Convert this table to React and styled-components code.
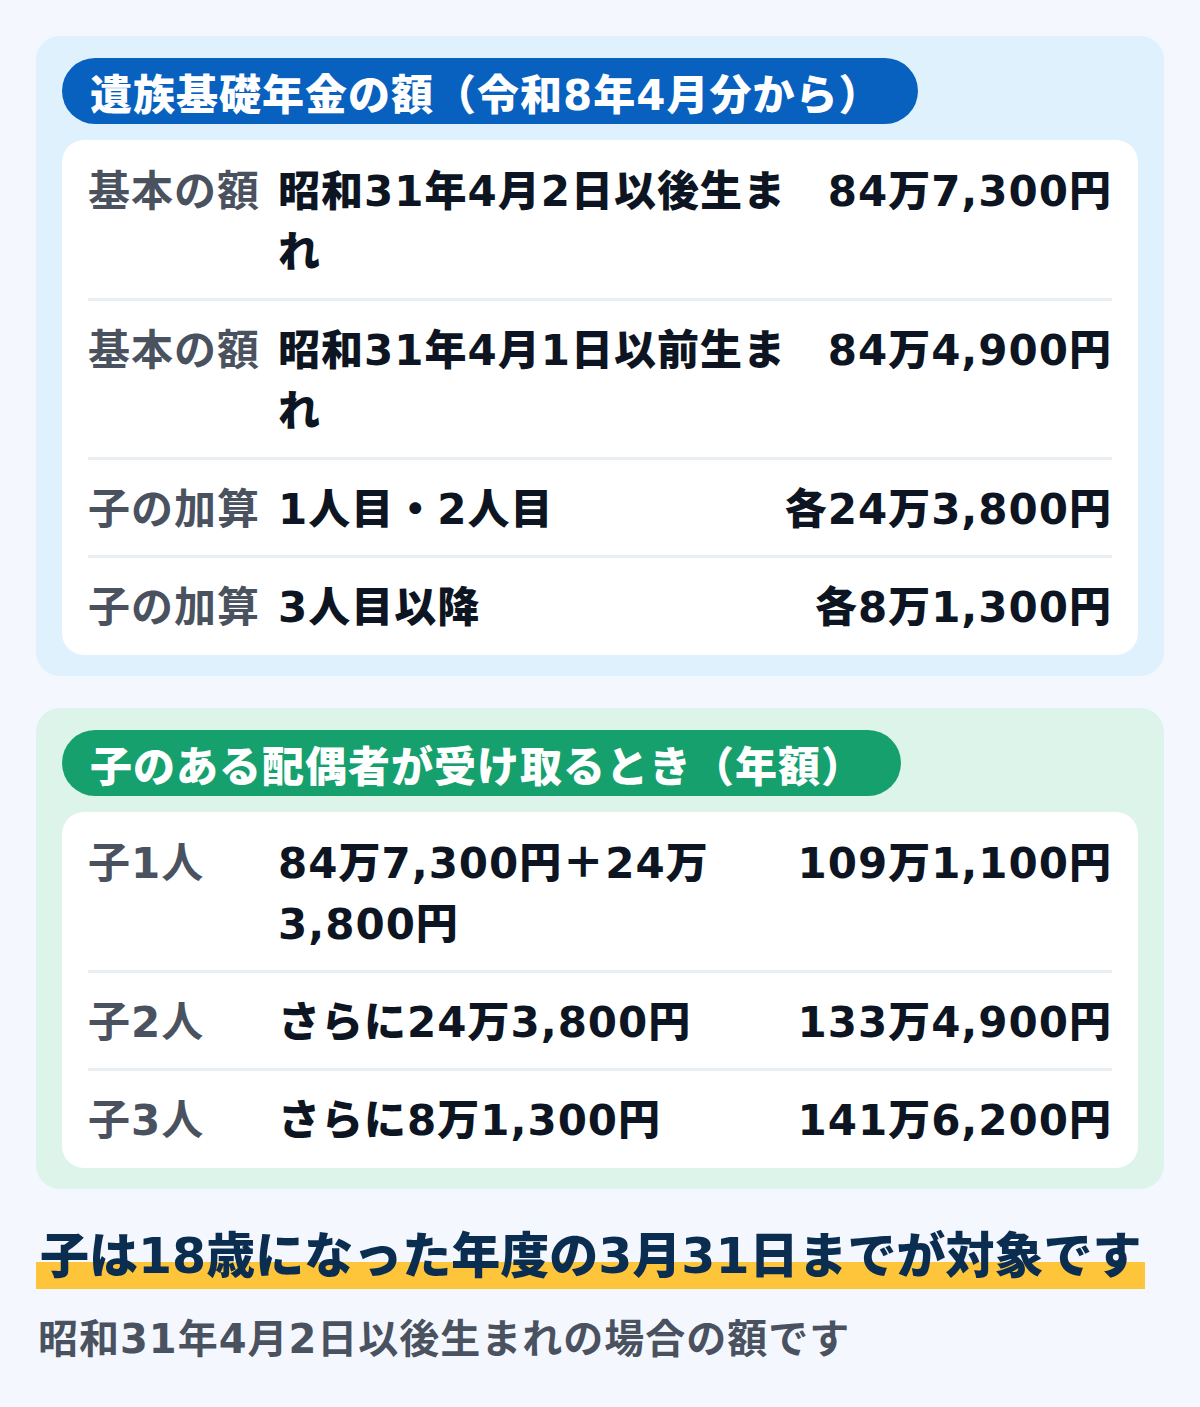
import styled, { createGlobalStyle } from "styled-components";

const GlobalStyle = createGlobalStyle`
  html, body {
    margin: 0;
    padding: 0;
    background: #f4f8fe;
  }
  body {
    font-family: "DejaVu Sans", "Noto Sans CJK JP", sans-serif;
  }
`;

const basicRows = [
    { label: "基本の額", text: "昭和31年4月2日以後生まれ", value: "84万7,300円" },
    { label: "基本の額", text: "昭和31年4月1日以前生まれ", value: "84万4,900円" },
    { label: "子の加算", text: "1人目・2人目", value: "各24万3,800円" },
    { label: "子の加算", text: "3人目以降", value: "各8万1,300円" },
];

const spouseRows = [
    { label: "子1人", text: "84万7,300円＋24万3,800円", value: "109万1,100円" },
    { label: "子2人", text: "さらに24万3,800円", value: "133万4,900円" },
    { label: "子3人", text: "さらに8万1,300円", value: "141万6,200円" },
];

const Table = ({ rows }) => (
    <Card>
        {rows.map((r, i) => (
            <Row key={i} last={i === rows.length - 1}>
                <Label>{r.label}</Label>
                <Text>{r.text}</Text>
                <Value>{r.value}</Value>
            </Row>
        ))}
    </Card>
);

export default function App() {
    return (
        <Page>
            <GlobalStyle />
            <Section tone="blue">
                <Pill tone="blue">遺族基礎年金の額（令和8年4月分から）</Pill>
                <Table rows={basicRows} />
            </Section>

            <Section tone="green">
                <Pill tone="green">子のある配偶者が受け取るとき（年額）</Pill>
                <Table rows={spouseRows} />
            </Section>

            <Note>
                <Marker>子は18歳になった年度の3月31日までが対象です</Marker>
            </Note>
            <Sub>昭和31年4月2日以後生まれの場合の額です</Sub>
        </Page>
    );
}

/* ================= スタイル ================= */

const tones = {
    blue: { bg: "#def1fc", pill: "#0860bf" },
    green: { bg: "#dcf4ea", pill: "#16a06d" },
};

const Page = styled.div`
    padding: 36px;
    display: flex;
    flex-direction: column;
    gap: 32px;
`;

const Section = styled.section`
    background: ${(p) => tones[p.tone].bg};
    border-radius: 24px;
    padding: 22px 26px 21px;
    display: flex;
    flex-direction: column;
    align-items: flex-start;
    gap: 16px;
`;

const Pill = styled.div`
    height: 66px;
    display: flex;
    align-items: center;
    padding: 0 37px 0 28px;
    border-radius: 33px;
    background: ${(p) => tones[p.tone].pill};
    color: #fff;
    font-size: 42px;
    font-weight: 900;
    letter-spacing: 1px;
    white-space: nowrap;
`;

const Card = styled.div`
    align-self: stretch;
    background: #fff;
    border-radius: 22px;
    padding: 2px 26px 2px;
`;

const Row = styled.div`
    display: flex;
    align-items: flex-start;
    gap: 24px;
    padding: 19px 0 15px;
    border-bottom: ${(p) => (p.last ? "none" : "3px solid #e9eef3")};
    font-size: 42px;
    line-height: 61px;
    letter-spacing: 1px;
`;

const Label = styled.div`
    width: 166px;
    flex-shrink: 0;
    color: #4a5260;
    font-weight: 700;
    white-space: nowrap;
`;

const Text = styled.div`
    flex: 1;
    min-width: 0;
    color: #0d1522;
    font-weight: 900;
`;

const Value = styled.div`
    flex-shrink: 0;
    text-align: right;
    color: #0d1522;
    font-weight: 900;
    white-space: nowrap;
`;

const Note = styled.div`
    margin-top: 4px;
`;

const Marker = styled.span`
    display: inline-block;
    padding: 0 4px;
    font-size: 49px;
    line-height: 64px;
    font-weight: 900;
    color: #0b2d50;
    background: linear-gradient(transparent 58%, #fec53b 58%);
    white-space: nowrap;
`;

const Sub = styled.div`
    margin-top: -10px;
    padding-left: 2px;
    font-size: 40px;
    line-height: 56px;
    letter-spacing: 1px;
    font-weight: 700;
    color: #4a5260;
`;
